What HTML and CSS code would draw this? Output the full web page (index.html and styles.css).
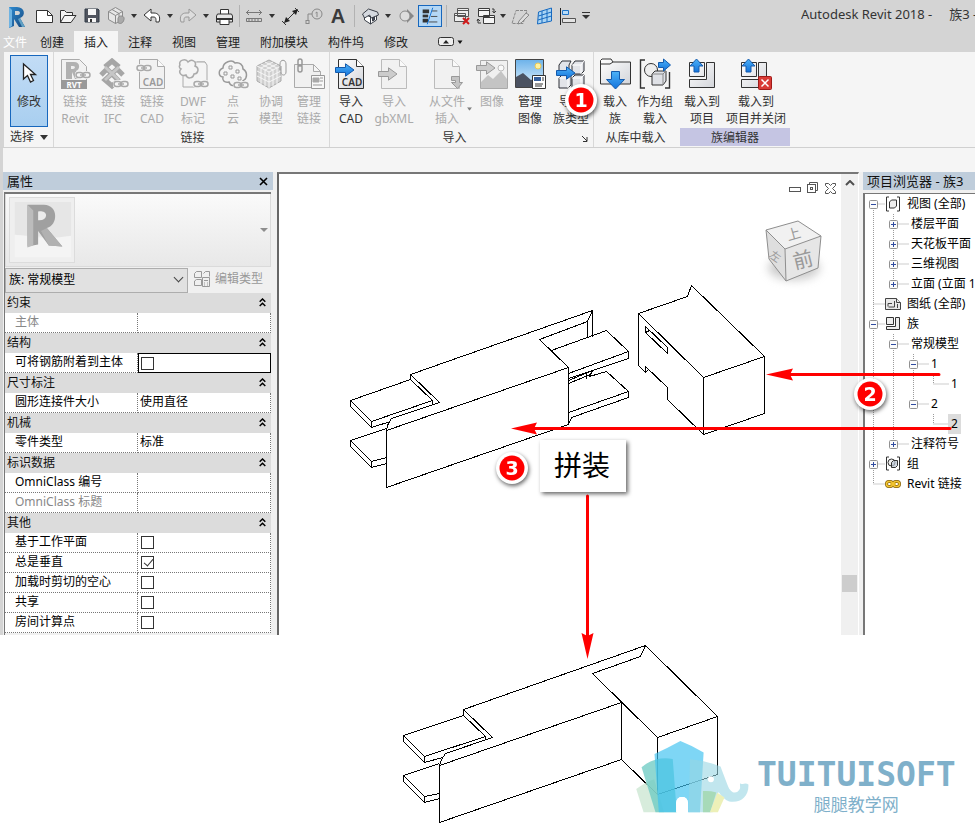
FILE: index.html
```html
<!DOCTYPE html>
<html lang="zh-CN">
<head>
<meta charset="utf-8">
<title>Autodesk Revit 2018 - 族3</title>
<link rel="stylesheet" href="styles.css">
</head>
<body>
<svg class="defs" aria-hidden="true">
  <defs>
    <linearGradient id="gBlue" x1="0" y1="0" x2="0" y2="1"><stop offset="0" stop-color="#4db1f7"/><stop offset="1" stop-color="#1273dc"/></linearGradient>
    <linearGradient id="gPaper" x1="0" y1="0" x2="1" y2="1"><stop offset="0" stop-color="#ffffff"/><stop offset="1" stop-color="#d3d5da"/></linearGradient>
    <linearGradient id="gSky" x1="0" y1="0" x2="0" y2="1"><stop offset="0" stop-color="#6cb2ea"/><stop offset="1" stop-color="#e4f2fb"/></linearGradient>
    <linearGradient id="gR" x1="0" y1="0" x2="1" y2="1"><stop offset="0" stop-color="#2e8ad0"/><stop offset="1" stop-color="#17477c"/></linearGradient>
    <symbol id="chain" viewBox="0 0 16 8">
      <g fill="none" stroke="#f5f5f5" stroke-width="4"><rect x="1.5" y="2" width="7" height="4" rx="2"/><rect x="7.500" y="2" width="7" height="4" rx="2"/></g>
      <g fill="none" stroke="#a9a9a9" stroke-width="1.500"><rect x="1" y="1.500" width="7" height="5" rx="2.500"/><rect x="8" y="1.500" width="7" height="5" rx="2.500"/><path d="M5 4h6"/></g>
    </symbol>
    <symbol id="caret" viewBox="0 0 6 4"><path d="M0 0h6L3 4z" fill="#333"/></symbol>
    <symbol id="page" viewBox="0 0 32 32"><path d="M3.500 1.500h18l7 7v22h-25z" fill="url(#gPaper)"/><path d="M21.500 1.500v7h7" fill="#fff"/></symbol>
    <symbol id="pageOff" viewBox="0 0 32 32"><path d="M3.500 1.500h18l7 7v22h-25z" fill="#f1f1f1"/><path d="M21.500 1.500v7h7" fill="#fafafa"/></symbol>
    <symbol id="arrow" viewBox="0 0 20 14"><path d="M.5 4.500h10V.8L19 7l-8.500 6.200V9.500H.5z"/></symbol>
    <symbol id="plus" viewBox="0 0 9 9"><rect x=".5" y=".5" width="8" height="8" rx="1" fill="#fbfbfb" stroke="#919191"/><path d="M2 4.500h5M4.500 2v5" stroke="#2f4ba0"/></symbol>
    <symbol id="minus" viewBox="0 0 9 9"><rect x=".5" y=".5" width="8" height="8" rx="1" fill="#fbfbfb" stroke="#919191"/><path d="M2 4.500h5" stroke="#2f4ba0"/></symbol>
    <symbol id="fold" viewBox="0 0 7 9"><path d="M.7 3.700L3.500 1l2.800 2.700M.7 8L3.500 5.300 6.300 8" fill="none" stroke="#000" stroke-width="1.500"/></symbol>
  </defs>
</svg>

<div class="app">
<header class="titlebar">
  <div class="quick" role="toolbar" aria-label="快速访问工具栏">
    <button class="tool logo" aria-label="Revit"><svg viewBox="0 0 24 24"><path d="M5 3h8c8 0 9 9 3 11l5 9h-6l-5-8v7l-5 2z" fill="url(#gR)"/><path d="M5 3l3 3v16l-3 2z" fill="#6fb3e2"/><path d="M11 7h3c3 0 2 4 0 4h-3z" fill="#d4d4d4"/><path d="M14 15l4 8h3l-5-9z" fill="#5fa0c4"/></svg></button>
    <button class="tool" aria-label="新建"><svg viewBox="0 0 24 24"><path d="M4.500 6.500h11l5 5v7h-16z" fill="#fff" stroke="#333"/><path d="M15.500 6.500v5h5" fill="none" stroke="#333"/></svg></button>
    <button class="tool" aria-label="打开"><svg viewBox="0 0 24 24"><path d="M4.500 18.500v-12h4l2 2h6v3M4.500 18.500l4-7h11.500l-5 7z" fill="#f4f4f4" stroke="#333"/></svg></button>
    <button class="tool" aria-label="保存"><svg viewBox="0 0 24 24"><path d="M5 5h13l1 1v12H5z" fill="#51555f" stroke="#333c49"/><path d="M8 5h8v6H8z" fill="#f6f6f6"/><path d="M8 14h8v4H8z" fill="#f6f6f6"/><path d="M10 15h2v3h-2z" fill="#333"/></svg></button>
    <button class="tool" aria-label="同步"><svg viewBox="0 0 24 24" fill="#e6e6e6" stroke="#8b8b8b"><path d="M4.500 7.500l7-4 7 4v8l-7 4-7-4z"/><path d="M4.500 7.500l7 4 7-4M11.500 11.500v8M8 5.500l7 4v8" fill="none"/><path d="M14 14.500c1-4 7-3 6 1s-4 5-6 3z" fill="#aaa"/></svg></button>
    <button class="drop" aria-label="同步选项"><svg viewBox="0 0 6 4"><use href="#caret"/></svg></button>
    <button class="tool" aria-label="放弃"><svg viewBox="0 0 24 24"><path d="M4 11l7-6v4h3c4 0 7 3 5 9h-3c0-4 0-5-3-5h-2v4z" fill="#fff" stroke="#333"/></svg></button>
    <button class="drop" aria-label="放弃列表"><svg viewBox="0 0 6 4"><use href="#caret"/></svg></button>
    <button class="tool" aria-label="重做"><svg viewBox="0 0 24 24"><path d="M20 11l-7-6v4h-3c-4 0-7 3-5 9h3c0-4 0-5 3-5h2v4z" fill="#ddd" stroke="#999"/></svg></button>
    <button class="drop" aria-label="重做列表"><svg viewBox="0 0 6 4"><use href="#caret"/></svg></button>
    <button class="tool" aria-label="打印"><svg viewBox="0 0 24 24"><path d="M8.500 10V5.500h8V10" fill="#fff" stroke="#333"/><path d="M5.500 10h14l1 2v6h-16v-6z" fill="#e6e6e6" stroke="#333"/><path d="M5 15h15" stroke="#333" stroke-width="2"/><path d="M8 15.500h9v5H8z" fill="#fff" stroke="#333"/></svg></button>
    <span class="split"></span>
    <button class="tool" aria-label="测量"><svg viewBox="0 0 24 24" fill="none" stroke="#777"><path d="M4 8.500h16M7 6L4.500 8.500 7 11M17 6l2.500 2.500L17 11"/><path d="M4.500 14.500h15v3h-15zM7 15v2M10 15v2M13 15v2M16 15v2"/></svg></button>
    <button class="drop" aria-label="测量选项"><svg viewBox="0 0 6 4"><use href="#caret"/></svg></button>
    <button class="tool" aria-label="对齐标注"><svg viewBox="0 0 24 24"><path d="M7 18L19 6M4 17l4 4M17 4l4 4" stroke="#333"/><path d="M6 19l2-6 4 4zM20 5l-6 2 4 4z" fill="#222"/></svg></button>
    <button class="tool" aria-label="按类别标记"><svg viewBox="0 0 24 24" fill="none" stroke="#888"><circle cx="15" cy="10" r="5"/><path d="M13.500 9l1.500-1v5M10 10H6v7"/><rect x="4" y="16.500" width="3" height="3"/></svg></button>
    <button class="tool letter" aria-label="文字">A</button>
    <span class="split wide"></span>
    <button class="tool" aria-label="默认三维视图"><svg viewBox="0 0 24 24" fill="#fff" stroke="#3b4049"><path d="M6.500 10v6l6 4v-7zM12.500 13l6-3v6l-6 4z"/><path d="M4.500 10l6-5 9 3 1 3-7 3-2-3-5 3z" fill="#d5d9df"/><path d="M14.500 17v-3l2-1v3z" fill="#4b5260"/></svg></button>
    <button class="drop" aria-label="三维视图选项"><svg viewBox="0 0 6 4"><use href="#caret"/></svg></button>
    <button class="tool" aria-label="剖面"><svg viewBox="0 0 24 24"><path d="M13 5v14l7-7z" fill="#888"/><circle cx="11" cy="12" r="5" fill="#ddd" stroke="#888"/></svg></button>
    <button class="tool pressed" aria-label="细线" aria-pressed="true"><svg viewBox="0 0 24 24"><path d="M4 7h7M4 17h6" stroke="#333" stroke-width="4"/><path d="M4 12h6" stroke="#333" stroke-width="3"/><path d="M14 6.500h6M13 12.500h7M11 18.500h9" stroke="#444"/><path d="M15 3L9 21" stroke="#0a6cd3"/></svg></button>
    <span class="split wide"></span>
    <button class="tool" aria-label="关闭隐藏窗口"><svg viewBox="0 0 24 24" fill="#eee" stroke="#555"><path d="M7.500 4.500h11v8h-11zM7.500 6.500h11M4.500 9.500h11v8h-11zM4.500 11.500h11"/><path d="M13 14l6 6M19 14l-6 6" stroke="#d01919" stroke-width="2"/></svg></button>
    <button class="tool" aria-label="切换窗口"><svg viewBox="0 0 24 24" fill="#f5f5f5" stroke="#3b3b3b"><path d="M4.500 4.500h11v8h-11zM4.500 6.500h11M9.500 11.500h11v8h-11zM9.500 13.500h11"/><path d="M18 5h2v3M18.500 7l1.500 2 2-2M4 15v4h3M3 17l1-2 2 2" fill="none"/></svg></button>
    <button class="drop short" aria-label="窗口列表"><svg viewBox="0 0 6 4"><use href="#caret"/></svg></button>
    <button class="tool" aria-label="参照平面"><svg viewBox="0 0 24 24" fill="none" stroke="#888"><path d="M8 6.500h11L15 19.500H4z" stroke-dasharray="3 1"/><path d="M18 9l3 2-8 8-3 1 1-3z" fill="#ddd"/></svg></button>
    <button class="tool" aria-label="工作平面"><svg viewBox="0 0 24 24" fill="#a9d4f4" stroke="#176ac0"><path d="M6.500 8l13-4v13l-14 3zM10 7v12M15 5.500V18M6.500 12l13-4M6 16l13.500-4"/></svg></button>
    <button class="tool" aria-label="对齐"><svg viewBox="0 0 24 24"><path d="M4.500 4v17" stroke="#222"/><path d="M6.500 6.500h6v4h-6z" fill="#b8dcf7" stroke="#1f74c8"/><path d="M6.500 14.500h13v4h-13z" fill="#e4e4e4" stroke="#555"/></svg></button>
    <button class="drop" aria-label="自定义"><svg viewBox="0 0 8 8" class="tall"><path d="M0 .5h8" stroke="#333"/><path d="M0 3h8L4 7z" fill="#333"/></svg></button>
  </div>
  <div class="caption"><span>Autodesk Revit 2018 -</span><span>族3 -</span></div>
</header>

<nav class="tabs">
  <a href="#" class="file">文件</a><a href="#">创建</a><a href="#" class="on">插入</a><a href="#">注释</a><a href="#">视图</a><a href="#">管理</a><a href="#" class="long">附加模块</a><a href="#" class="mid">构件坞</a><a href="#">修改</a>
  <button class="fold" aria-label="最小化功能区"><svg viewBox="0 0 26 10" width="26" height="10"><rect x=".5" y=".5" width="15" height="8" rx="2" fill="#eee" stroke="#333"/><path d="M5 6.500h6L8 3z" fill="#222"/><path d="M19.500 3.500h5l-2.500 3.500z" fill="#111"/></svg></button>
</nav>

<section class="ribbon">
  <div class="panel select">
    <button class="cmd modify"><svg viewBox="0 0 32 32"><path d="M10.500 6v15l4-3.500 3 6.500 3-1.500-3-6h5z" fill="#fff" stroke="#222" stroke-width="1.300"/></svg><span>修改</span></button>
    <h2>选择 <svg viewBox="0 0 8 5" width="8" height="5"><path d="M0 0h8L4 5z" fill="#333"/></svg></h2>
  </div>
  <div class="panel link">
    <div class="cmds">
      <button class="cmd" disabled><svg viewBox="0 0 32 32"><path d="M2.500 1.500h18l7 7v22h-25z" fill="#f1f1f1" stroke="#aaa"/><path d="M2 22h26v9H2z" fill="#999"/><path d="M7 4h8c7 0 6 8 2 9l4 8h-5l-3-7v7H7z" fill="#b1b1b1"/><path d="M12 8h2c3 0 2 3 0 3h-2z" fill="#eee"/><text x="15" y="30" class="tiny inv" text-anchor="middle">RVT</text><use href="#chain" x="16" y="13" width="16" height="8"/></svg><span>链接<br>Revit</span></button>
      <button class="cmd" disabled><svg viewBox="0 0 32 32"><g fill="none" stroke="#a6a6a6" stroke-width="5"><path d="M8 9l7-6 7 6M4 17l6-6 12 12M26 17l-6-6L8 22l7 6 7-6"/></g><path d="M8 9l14 13M22 9L8 22" stroke="#c6c6c6" stroke-width="3" fill="none"/><use href="#chain" x="16" y="22" width="16" height="8"/></svg><span>链接<br>IFC</span></button>
      <button class="cmd" disabled><svg viewBox="0 0 32 32"><g stroke="#aaa"><use href="#pageOff"/></g><use href="#chain" x="0" y="6" width="16" height="8"/><text x="17" y="28" class="tiny dim" text-anchor="middle">CAD</text></svg><span>链接<br>CAD</span></button>
      <button class="cmd" disabled><svg viewBox="0 0 32 32" fill="#f4f4f4" stroke="#aaa"><path d="M10 4h18v25H6V16"/><path d="M20 4h8l2 3v18h-8" /><path d="M3 7c-2-5 6-7 8-3 4-4 9 0 7 4 5 2 3 8-1 8-1 5-7 5-8 1-5 2-8-3-5-6-2-1-2-3-1-4z" stroke-width="1.500"/><use href="#chain" x="16" y="22" width="16" height="8"/></svg><span>DWF<br>标记</span></button>
      <button class="cmd" disabled><svg viewBox="0 0 32 32" fill="#f4f4f4" stroke="#999"><path d="M6 10c0-6 9-9 12-5 5-1 8 2 8 6 5 3 4 9 1 11l-5 4c-4 3-9 2-10-2-5 1-7-2-6-5-5-1-5-7 0-9z" stroke-width="1.500"/><path d="M12 8h3v3h-3zM19 12h3v3h-3zM7 14h3v3H7zM14 17h3v3h-3zM21 19h3v3h-3z"/><use href="#chain" x="16" y="23" width="16" height="8"/></svg><span>点<br>云</span></button>
      <button class="cmd" disabled><svg viewBox="0 0 32 32" fill="#d0d0d0" stroke="#aaa"><path d="M2 8l12-6 12 6v15l-12 7-12-7z"/><path d="M2 8l12 6 12-6M14 14v16M6 6l12 6v16M10 4l12 6v16M18 4L6 10v16M22 6l-12 6v16M2 13l12 6 12-6M2 18l12 6 12-6" stroke="#f7f7f7" fill="none"/><path d="M25 12V6c0-5 6-5 6 0v8c0 4-5 4-5 0V8" fill="#f5f5f5" stroke="#999"/></svg><span>协调<br>模型</span></button>
      <button class="cmd" disabled><svg viewBox="0 0 32 32" fill="#f0f0f0" stroke="#aaa"><path d="M1.500 6.500h19l7 7v16h-26zM20.500 6.500v7h7"/><path d="M18.500 17.500h13v13h-13z" fill="#f8f8f8" stroke="#999"/><path d="M20 20h6v4h-6z" fill="#aaa"/><path d="M27 20h3M27 23h3M20 27h9" stroke="#999"/><g fill="none" stroke="#999" stroke-width="1.500"><rect x="5" y="1" width="4" height="7" rx="2"/><rect x="5" y="7" width="4" height="7" rx="2"/></g></svg><span>管理<br>链接</span></button>
    </div>
    <h2>链接</h2>
  </div>
  <div class="panel import">
    <div class="cmds">
      <button class="cmd"><svg viewBox="0 0 32 32"><g stroke="#333"><use href="#page"/></g><g fill="url(#gBlue)" stroke="#145aac"><use href="#arrow" x="0" y="5" width="20" height="14"/></g><text x="17" y="28" class="tiny" text-anchor="middle">CAD</text></svg><span>导入<br>CAD</span></button>
      <button class="cmd" disabled><svg viewBox="0 0 32 32"><g stroke="#bbb"><use href="#pageOff"/></g><g fill="#ccc" stroke="#999"><use href="#arrow" x="0" y="9" width="20" height="14"/></g></svg><span>导入<br>gbXML</span></button>
      <button class="cmd more" disabled><svg viewBox="0 0 32 32"><g stroke="#bbb"><use href="#pageOff"/></g><path d="M20.500 18.500h8v6h3l-5 6-6-6h4v-2h-4z" fill="#c4c4c4" stroke="#999"/></svg><span>从文件<br>插入</span><svg class="caret" viewBox="0 0 6 4"><use href="#caret"/></svg></button>
      <button class="cmd" disabled><svg viewBox="0 0 32 32"><path d="M4.500 2.500h27v28h-27z" fill="#f0f0f0" stroke="#aaa"/><path d="M5 24l7-7 5 4 8-8 6 8v9H5z" fill="#c4c4c4"/><circle cx="25" cy="10" r="3" fill="#fafafa" stroke="#bbb"/><g fill="#ccc" stroke="#999"><use href="#arrow" x="0" y="3" width="20" height="14"/></g></svg><span>图像</span></button>
      <button class="cmd"><svg viewBox="0 0 32 32"><path d="M1.500 1.500h28v28h-28z" fill="url(#gSky)" stroke="#444"/><circle cx="24" cy="8" r="3" fill="#fff3a0" stroke="#e8c75a"/><path d="M2 19l7-4 8 7 10-5v12H2z" fill="#4b5261"/><path d="M18.500 17.500h13v13h-13z" fill="#fff" stroke="#333"/><path d="M20 19h7v4h-7z" fill="#345f9d"/><path d="M28 20h2M28 22h2M21 26h8M21 28h7" stroke="#333"/></svg><span>管理<br>图像</span></button>
      <button class="cmd"><svg viewBox="0 0 32 32" fill="#e2e4e9" stroke="#2c2f36"><path d="M4 7l3-4h9l-2 4v9H4zM17 7l3-4h9v10l-3 3h-9zM4 20l3-3h9v10l-3 3H4zM17 20l3-3h9v10l-3 3h-9z"/><path d="M17 7h9l3-4M26 7v9M4 20h9l3-3M13 20v10M17 20h9l3-3M26 20v10" stroke="#fff" fill="none"/><g fill="url(#gBlue)" stroke="#145aac"><use href="#arrow" x="1" y="8" width="20" height="14"/></g></svg><span>导入<br>族类型</span></button>
    </div>
    <h2>导入 <svg class="launch" viewBox="0 0 6 6" width="6" height="6"><path d="M0 0l5 5M5 1v4.500H1" stroke="#333" fill="none"/></svg></h2>
  </div>
  <div class="panel load">
    <div class="cmds">
      <button class="cmd"><svg viewBox="0 0 32 32"><path d="M1.500 26V2.500L3 1h9l2 3h17.500v22z" fill="url(#gPaper)" stroke="#333"/><path d="M2 6h9l3-2" stroke="#333" fill="none"/><path d="M12.500 13.500h8v8h5L16.500 31l-9-9.500h5z" fill="url(#gBlue)" stroke="#145aac"/></svg><span>载入<br>族</span></button>
      <button class="cmd"><svg viewBox="0 0 32 32"><path d="M6 2H1.500v28H6M26 30h4.500V14" fill="none" stroke="#333" stroke-width="1.400"/><circle cx="12" cy="12" r="6.500" fill="#eee" stroke="#333"/><path d="M13 16l3-3h11v10l-3 4H13z" fill="#dfe1e6" stroke="#333"/><path d="M13 16h11l3-3M24 16v11" fill="none" stroke="#888"/><path d="M19.500 4.500h5V1l7 6-7 6V9.500h-5z" fill="url(#gBlue)" stroke="#145aac"/></svg><span>作为组<br>载入</span></button>
    </div>
    <h2>从库中载入</h2>
  </div>
  <div class="panel family">
    <div class="cmds">
      <button class="cmd"><svg viewBox="0 0 32 32"><path d="M3.500 4.500h15v14h-15zM20.500 4.500h8v25h-25v-8h17z" fill="url(#gPaper)" stroke="#333"/><path d="M8 14V8H4l6.500-7L17 8h-4v6z" fill="url(#gBlue)" stroke="#145aac"/></svg><span>载入到<br>项目</span></button>
      <button class="cmd"><svg viewBox="0 0 32 32"><path d="M1.500 4.500h15v14h-15zM18.500 4.500h8v25h-25v-8h17z" fill="url(#gPaper)" stroke="#333"/><path d="M6 14V8H2l6.500-7L15 8h-4v6z" fill="url(#gBlue)" stroke="#145aac"/><rect x="18.500" y="18.500" width="13" height="13" rx="1" fill="#d93a35" stroke="#9f1a18"/><path d="M21.500 21.500l7 7M28.500 21.500l-7 7" stroke="#fff" stroke-width="1.500"/></svg><span>载入到<br>项目并关闭</span></button>
    </div>
    <h2>族编辑器</h2>
  </div>
</section>
<div class="options"></div>

<main class="work">
  <aside class="props">
    <header class="bar"><h2>属性</h2><button aria-label="关闭"><svg viewBox="0 0 9 9" width="9" height="9"><path d="M1 1l7 7M8 1L1 8" stroke="#000" stroke-width="1.600"/></svg></button></header>
    <div class="sheet">
      <div class="type">
        <svg class="thumb" viewBox="0 0 66 66"><path d="M0 0h66v66H0z" fill="#efefef"/><path d="M5 4h58v38L5 38z" fill="#e6e6e6"/><path d="M5 38l34 4 24-3v22H5z" fill="#f4f4f4"/><path d="M18 7h17c15 0 15 21 3 24l16 19-14-1-11-15v14l-11 2z" fill="#a0a0a0"/><path d="M18 7l6 6v36l-6 2z" fill="#bcbcbc"/><path d="M29 14c11-3 11 10 0 9z" fill="#ececec"/><path d="M38 31l16 19-14-1-8-15z" fill="#b1b1b1"/></svg>
        <svg class="down" viewBox="0 0 8 4" width="8" height="4"><path d="M0 0h8L4 4z" fill="#8d8d8d"/></svg>
      </div>
      <div class="pick">
        <select aria-label="族"><option>族: 常规模型</option></select>
        <button disabled><svg viewBox="0 0 18 18" width="18" height="18" fill="none" stroke="#999"><path d="M1.500 3.500l2-2h5v6h-7zM10.500 3.500l2-2h4v5M1.500 11l2-1.500h5v6h-7z"/><path d="M9.500 7.500h7v9h-7zM11 10.500h4M11 13h1M14 13h1M11 15h1M14 15h1"/></svg>编辑类型</button>
      </div>
      <table class="grid">
        <tbody>
        <tr><th colspan="2">约束<svg viewBox="0 0 7 9"><use href="#fold"/></svg></th></tr>
        <tr class="off"><td>主体</td><td></td></tr>
        <tr><th colspan="2">结构<svg viewBox="0 0 7 9"><use href="#fold"/></svg></th></tr>
        <tr><td><label for="c1">可将钢筋附着到主体</label></td><td class="focus"><input type="checkbox" id="c1"></td></tr>
        <tr><th colspan="2">尺寸标注<svg viewBox="0 0 7 9"><use href="#fold"/></svg></th></tr>
        <tr><td>圆形连接件大小</td><td>使用直径</td></tr>
        <tr><th colspan="2">机械<svg viewBox="0 0 7 9"><use href="#fold"/></svg></th></tr>
        <tr><td>零件类型</td><td>标准</td></tr>
        <tr><th colspan="2">标识数据<svg viewBox="0 0 7 9"><use href="#fold"/></svg></th></tr>
        <tr><td>OmniClass 编号</td><td></td></tr>
        <tr class="off"><td>OmniClass 标题</td><td></td></tr>
        <tr><th colspan="2">其他<svg viewBox="0 0 7 9"><use href="#fold"/></svg></th></tr>
        <tr><td><label for="c2">基于工作平面</label></td><td><input type="checkbox" id="c2"></td></tr>
        <tr><td><label for="c3">总是垂直</label></td><td><input type="checkbox" id="c3" checked></td></tr>
        <tr><td><label for="c4">加载时剪切的空心</label></td><td><input type="checkbox" id="c4"></td></tr>
        <tr><td><label for="c5">共享</label></td><td><input type="checkbox" id="c5"></td></tr>
        <tr><td><label for="c6">房间计算点</label></td><td><input type="checkbox" id="c6"></td></tr>
        </tbody>
      </table>
    </div>
  </aside>

  <section class="view">
    <svg class="model" viewBox="279 174 562 461" width="562" height="461">
      <g class="wire">
        <path d="M350.500 400.500L410.500 379.500L432.500 400.500L371.500 421.500zM350.500 400.500V406.500L371.500 427.500V421.500M371.500 427.500L390.500 421.500"/>
        <path d="M410.500 379.500V374.500L592.500 310.500V336.500M410.500 374.500L439.500 402.500L391.500 418.500L387.500 425.500L386.500 430.500M432.500 400.500V404.500"/>
        <path d="M386.500 430.500L568.500 367.500V424.500L386.500 487.500z"/>
        <path d="M592.500 310.500L587.500 321.500V337.500M587.500 321.500L539.500 339.500L568.500 367.500"/>
        <path d="M551.500 350.500L606.500 330.500L628.500 351.500L568.500 373.500M628.500 351.500V358.500L568.500 378.500"/>
        <path d="M589.500 376.500L606.500 371.500L628.500 391.500L568.500 412.500M628.500 391.500V397.500L571.500 417.500L568.500 424.500"/>
        <path d="M568.500 380.500L592.500 370.500M568.500 383.500L590.500 374.500M586.500 373.500V378.500M589.500 376.500L592.500 370.500"/>
        <path d="M350.500 440.500L386.500 428.500M350.500 440.500L371.500 461.500L386.500 457.500M350.500 440.500V446.500L371.500 467.500L386.500 463.500M371.500 461.500V467.500"/>
        <path d="M638.500 313.500L687.500 296.500L691.500 285.500L764.500 356.500V413.500L703.500 434.500L667.500 399.500V387.500L645.500 366.500V372.500L638.500 365.500zL703.500 377.500L764.500 356.500M703.500 377.500V434.500M645.500 372.500L648.500 369.500"/>
        <path d="M645.500 326.500L667.500 347.500V353.500L645.500 332.500zM645.500 332.500L649.500 330.500"/>
      </g>
      <g class="cube">
        <ellipse cx="794" cy="268" rx="26" ry="12" fill="#999" opacity=".5" filter="url(#soft)"/>
        <path d="M766 230l32-9 23 15-36 13z" fill="#f1f1f1"/><path d="M766 230l19 19 1 32-17-22z" fill="#dedede"/><path d="M785 249l36-13-3 32-32 13z" fill="#e6e6e6"/>
        <g fill="none" stroke="#8e8e8e"><path d="M766 230l32-9 23 15-36 13zM766 230l3 29 17 22 32-13 3-32M785 249l1 32"/></g>
        <text x="787" y="239" transform="rotate(-16 794 235)" font-size="14">上</text><text x="770" y="260" transform="rotate(35 775 256)" font-size="11">左</text><text x="793" y="267" transform="rotate(-14 803 260)" font-size="20">前</text>
      </g>
      <g fill="none" stroke="#555"><rect x="789.500" y="187.500" width="11" height="4"/><rect x="807.500" y="184.500" width="8" height="8"/><path d="M809.500 184.500v-2h8v8h-2"/><rect x="810.500" y="187.500" width="2" height="2"/><path d="M825.500 183.500h3l2 2 2-2h3v2l-3 3 3 3v2h-3l-2-2-2 2h-3v-2l3-3-3-3z"/></g>
      <filter id="soft" x="-1" y="-1" width="3" height="3"><feGaussianBlur stdDeviation="5"/></filter>
    </svg>
    <div class="scroll"><svg viewBox="0 0 10 6" width="10" height="6"><path d="M1 5l4-4 4 4" fill="none" stroke="#505050" stroke-width="2"/></svg><i></i></div>
  </section>

  <aside class="browser">
    <header class="bar"><h2>项目浏览器 - 族3</h2></header>
    <div class="tree">
      <svg class="lines" viewBox="0 0 110 300" width="110" height="300"><path d="M8.500 10v280M8.500 10h12M8.500 110h12M8.500 130h12M8.500 270h12M8.500 290h12M28.500 20v70M28.500 30h16M28.500 50h16M28.500 70h16M28.500 90h16M28.500 140v110M28.500 150h16M28.500 250h16M48.500 160v50M48.500 170h15M48.500 210h15M68.500 180v10h15M68.500 220v10h15" fill="none" stroke="#9b9b9b" stroke-dasharray="1 1"/></svg>
      <ul>
        <li><svg class="tog"><use href="#minus"/></svg><svg class="ico" viewBox="0 0 16 16"><path d="M4 1H1.500v14H4M12 1h2.500v14H12" fill="none" stroke="#333"/><path d="M4.500 6l2-2h5v6l-2 2h-5z" fill="#eee" stroke="#333"/></svg>视图 (全部)</li>
        <li class="l1"><svg class="tog"><use href="#plus"/></svg>楼层平面</li>
        <li class="l1"><svg class="tog"><use href="#plus"/></svg>天花板平面</li>
        <li class="l1"><svg class="tog"><use href="#plus"/></svg>三维视图</li>
        <li class="l1"><svg class="tog"><use href="#plus"/></svg>立面 (立面 1</li>
        <li class="leaf"><svg class="ico" viewBox="0 0 16 16" fill="#e9e9e9" stroke="#444"><path d="M.5 2.500h11l4 4v7H.5z"/><path d="M3 10.500v-3h4M9.500 5v6h-6M11.500 2.500v4h4M12.500 8v4"/></svg>图纸 (全部)</li>
        <li><svg class="tog"><use href="#minus"/></svg><svg class="ico" viewBox="0 0 16 16" fill="#eee" stroke="#333"><path d="M1.500 1.500h7v7h-7zM10.500 1.500h4v12h-13v-3h9z"/></svg>族</li>
        <li class="l1"><svg class="tog"><use href="#minus"/></svg>常规模型</li>
        <li class="l2"><svg class="tog"><use href="#minus"/></svg>1</li>
        <li class="l3">1</li>
        <li class="l2"><svg class="tog"><use href="#minus"/></svg>2</li>
        <li class="l3"><mark>2</mark></li>
        <li class="l1"><svg class="tog"><use href="#plus"/></svg>注释符号</li>
        <li><svg class="tog"><use href="#plus"/></svg><svg class="ico" viewBox="0 0 16 16" stroke="#333" fill="none"><path d="M4 1H1.500v13H4M12 1h2.500v13H12"/><circle cx="6.500" cy="6.500" r="3.500" fill="#eee"/><path d="M6.500 6.500l2-2h4v5l-2 2h-4z" fill="#b9c4d3" fill-opacity=".7"/></svg>组</li>
        <li class="leaf"><svg class="ico" viewBox="0 0 16 16" fill="none"><g stroke="#86610b" stroke-width="3"><rect x="1.500" y="5.500" width="6" height="5" rx="2.500"/><rect x="8.500" y="5.500" width="6" height="5" rx="2.500"/></g><g stroke="#f3c631" stroke-width="1.500"><rect x="1.500" y="5.500" width="6" height="5" rx="2.500"/><rect x="8.500" y="5.500" width="6" height="5" rx="2.500"/><path d="M5 8h6"/></g></svg>Revit 链接</li>
      </ul>
    </div>
  </aside>
</main>

<section class="result">
  <svg class="model" viewBox="279 635 460 198" width="460" height="198">
    <g class="wire">
      <path d="M403.500 735.500L463.500 715.500L485.500 736.500L424.500 756.500zM403.500 735.500V741.500L424.500 762.500V756.500M424.500 762.500L442.500 757.500"/>
      <path d="M463.500 715.500V709.500L645.500 645.500L717.500 716.500V774.500L657.500 794.500V737.500L592.500 673.500L640.500 656.500L645.500 645.500M717.500 716.500L657.500 737.500M463.500 709.500L492.500 737.500L445.500 753.500L441.500 759.500L439.500 765.500M485.500 736.500V739.500"/>
      <path d="M439.500 765.500L621.500 702.500V759.500L439.500 822.500zM621.500 759.500L657.500 794.500"/>
      <path d="M403.500 775.500L439.500 763.500M403.500 775.500L424.500 796.500L439.500 793.500M403.500 775.500V781.500L424.500 802.500L439.500 798.500M424.500 796.500V802.500"/>
    </g>
  </svg>
  <div class="brand">
    <svg viewBox="18 30 342 220" width="114" height="73">
      <path d="M18 178q24-20 54-30l30 100H40z" fill="#c9e5d0" opacity=".75"/>
      <path d="M34 112q40-34 94-25l12 161H76z" fill="#6ac9c1" opacity=".75"/>
      <path d="M73 72q40-18 78-39 36 14 70 35l-11 180h-36v-28q-2-18-18-18t-18 18v28H86z" fill="#3ec2f0" opacity=".67"/>
      <path d="M180 88q45 3 92 22 8 22 22 58c8 22 26 28 36 10 3-9-2-12 2-18q4 4 10 2 8-2 14 2c2 38-25 57-58 51q-16-4-32-28l-18 61h-72z" fill="#97d6e2" opacity=".6"/>
      <path d="M219 184q20-2 40 4l-18 60h-22z" fill="#9ed5a6" opacity=".75"/><path d="M262 189l22 14-20 45h-24z" fill="#edf0b8"/>
      <circle cx="243" cy="148" r="9" fill="#fff"/><path d="M138 248v-28q2-18 18-18t18 18v28z" fill="#fff"/>
    </svg>
    <p><b>TUITUISOFT</b><span>腿腿教学网</span></p>
  </div>
</section>

<svg class="notes" viewBox="0 0 975 833" width="975" height="833">
  <defs><filter id="drop" x="-.3" y="-.3" width="1.700" height="1.700"><feDropShadow dx="2" dy="2" stdDeviation="2" flood-opacity=".6"/></filter></defs>
  <g stroke="#f00" stroke-width="3" stroke-linecap="round"><path d="M785 374.500h154M530 428.500h420M587.500 496v145"/></g>
  <g fill="#f00"><path d="M766 374.500l27-6-3 6 3 6zM511 428.500l26-6-3 6 3 6zM587.500 659l-6-26 6 3 6-3z"/></g>
  <rect x="540" y="440" width="86" height="52" fill="#fff" filter="url(#drop)"/>
  <text x="582" y="476" class="big">拼装</text>
  <g class="badge"><circle cx="581" cy="100" r="16" class="ring"/><circle cx="581" cy="100" r="12.500"/><text x="581" y="107">1</text></g>
  <g class="badge"><circle cx="870" cy="394" r="16" class="ring"/><circle cx="870" cy="394" r="12.500"/><text x="870" y="401">2</text></g>
  <g class="badge"><circle cx="512" cy="468" r="16" class="ring"/><circle cx="512" cy="468" r="12.500"/><text x="512" y="475">3</text></g>
</svg>
</div>
</body>
</html>
```
FILE: styles.css
```css
* { box-sizing: border-box; }
body { margin: 0; background: #fff; color: #000; font: 12px/20px "Noto Sans", "Noto Sans CJK SC", sans-serif; overflow-x: hidden; }
button { border: 0; padding: 0; background: none; font: inherit; color: inherit; }
h2, p, ul { margin: 0; padding: 0; font-size: 12px; font-weight: 400; list-style: none; }
.defs { position: absolute; width: 0; height: 0; }
.app { position: relative; overflow: hidden; }

/* quick access and caption */
.titlebar { display: flex; justify-content: space-between; height: 31px; background: #d4d4d4; }
.quick { display: flex; align-items: center; padding-left: 4px; }
.tool { flex: none; width: 24px; height: 22px; display: flex; align-items: center; justify-content: center; }
.tool svg { width: 24px; height: 24px; }
.logo { margin-right: 4px; }
.pressed { background: #b4d7f5; border: 1px solid #1767bd; }
.letter { font: bold 20px/22px "Liberation Sans", sans-serif; color: #3b3b3b; }
.drop { flex: none; width: 12px; height: 22px; display: flex; align-items: center; justify-content: center; }
.drop svg { width: 6px; height: 4px; }
.drop svg.tall { width: 8px; height: 8px; }
.drop.short { width: 10px; }
.split { flex: none; width: 6px; height: 22px; background: linear-gradient(#b2b2b2, #b2b2b2) center / 1px 100% no-repeat; }
.split.wide { width: 8px; }
.caption { display: flex; gap: 17px; width: 174px; overflow: hidden; white-space: nowrap; line-height: 28px; color: #333; font-size: 13px; }
.caption span { flex: none; }

/* tabs */
.tabs { display: flex; align-items: center; height: 21px; background: #d4d4d4; color: #222; }
.tabs a { width: 44px; height: 21px; line-height: 23px; text-align: center; color: inherit; text-decoration: none; }
.tabs .file { width: 30px; color: #fff; }
.tabs .on { background: #f5f5f5; }
.tabs .long { width: 68px; }
.tabs .mid { width: 56px; }
.fold { margin-left: 20px; display: flex; }

/* ribbon */
.ribbon { display: flex; height: 96px; background: #f5f5f5; border-left: 4px solid #d4d4d4; border-bottom: 1px solid #d0d0d0; color: #333; }
.panel { display: flex; flex-direction: column; justify-content: space-between; padding-bottom: 1px; border-right: 1px solid #d8d8d8; }
.panel h2 { height: 18px; line-height: 20px; text-align: center; }
.cmds { display: grid; }
.cmd { display: flex; flex-direction: column; align-items: center; gap: 3px; padding-top: 6px; line-height: 17px; white-space: nowrap; min-width: 0; color: #333; }
.cmd > svg { flex: none; width: 32px; height: 32px; }
.cmd:disabled { color: #aaa; }
.select { width: 50px; }
.select h2 { display: flex; gap: 6px; padding-left: 6px; align-items: center; }
.modify { width: 38px; height: 72px; margin: 3px 6px 0; padding-top: 2px; background: linear-gradient(#c2dcf5, #a9cff0); border: 1px solid #1767bd; }
.link { width: 276px; padding-left: 2px; }
.link .cmds { grid-template-columns: 38px 38px 40px 42px 38px 38px 38px; }
.import { width: 264px; }
.import .cmds { grid-template-columns: 42px 44px 62px 28px 48px 34px; }
.import h2 { position: relative; padding-right: 14px; }
.load { width: 86px; border-right: 0; }
.load .cmds { grid-template-columns: 42px 38px; }
.load h2 { padding-right: 3px; }
.family { width: 110px; border-right: 0; }
.family .cmds { grid-template-columns: 44px 64px; }
.family h2 { background: #c5c5e3; }
.launch { position: absolute; right: 5px; top: 8px; }
.more { position: relative; }
.cmd > .caret { position: absolute; right: 6px; bottom: 16px; width: 5px; height: 4px; opacity: .6; }
.tiny { font: 600 10px "Noto Sans", sans-serif; fill: #333; }
.tiny.dim { fill: #999; }
.tiny.inv { fill: #fff; font-size: 8px; font-weight: 700; }
.options { height: 24px; background: #f5f5f5; border-left: 3px solid #d4d4d4; }

/* workspace */
.work { display: grid; grid-template-columns: 270px minmax(0, 1fr) 112px; column-gap: 4px; height: 463px; background: #f0f0f0; border-left: 3px solid #d4d4d4; }
.bar { display: flex; align-items: center; justify-content: space-between; height: 18px; padding: 0 5px 0 4px; background: #bfcddb; color: #111; white-space: nowrap; overflow: hidden; }
.bar h2 { font-size: 13px; line-height: 18px; }
.bar button { display: flex; }
.sheet { margin: 2px 2px 0 1px; height: 443px; border-left: 1px solid #777; border-top: 2px solid #777; background: #f0f0f0; }
.type { display: flex; align-items: center; justify-content: space-between; height: 73px; padding: 0 2px 0 3px; background: linear-gradient(#fafafa, #e8e8e8); border: 1px solid #dadada; border-top: 0; }
.thumb { width: 66px; height: 66px; border: 1px solid #dcdcdc; }
.pick { position: relative; display: flex; height: 26px; align-items: center; gap: 5px; }
.pick select { width: 183px; height: 25px; padding: 0 24px 0 3px; border: 1px solid #adadad; border-radius: 0; appearance: none; font: inherit; color: #000; background: #e1e1e1; }
.pick::after { content: ""; position: absolute; left: 170px; top: 7px; width: 6px; height: 6px; border: solid #444; border-width: 0 1px 1px 0; transform: rotate(45deg); }
.pick button { display: flex; align-items: center; gap: 4px; padding-bottom: 2px; color: #999; }
.grid { width: 100%; border-collapse: separate; border-spacing: 0; table-layout: fixed; background: #fff; }
.grid th, .grid td { height: 20px; padding: 0; line-height: 18px; font-weight: 400; text-align: left; }
.grid th { padding-left: 2px; background: #dcdcdc; color: #111; }
.grid th svg { float: right; width: 7px; height: 9px; margin: 4px 5px 0 0; }
.grid td { line-height: 16px; padding: 0 0 2px 2px; border-bottom: 1px dotted #777; border-right: 1px dotted #777; }
.grid td:first-child { width: 133px; padding-left: 10px; }
.grid .off { color: #888; }
.grid td.focus { border: 1px solid #000; outline: 1px solid #000; outline-offset: -1px; padding-left: 1px; }
.grid input { appearance: none; display: block; width: 13px; height: 13px; margin: 2px 0 0 1px; border: 1px solid #333; background: #fff; }
.grid input:checked::after { content: ""; display: block; width: 4px; height: 8px; margin-left: 4px; border: solid #333; border-width: 0 1px 1px 0; transform: rotate(40deg); }

.view { display: flex; justify-content: space-between; min-width: 0; border-left: 2px solid #666; border-top: 2px solid #777; border-right: 1px solid #fff; background: #fff; overflow: hidden; }
.model { flex: none; display: block; }
.wire { fill: none; stroke: #000; stroke-width: 1; shape-rendering: crispEdges; }
.cube text { fill: #999; }
.scroll { flex: 1; display: flex; flex-direction: column; align-items: center; padding-top: 6px; background: #f0f0f0; }
.scroll i { width: 15px; height: 17px; margin-top: 389px; background: #cdcdcd; }
.browser { min-width: 0; }
.tree { position: relative; height: 442px; margin: 3px 0 0; border-left: 2px solid #777; border-top: 1px solid #777; background: #fff; overflow: hidden; white-space: nowrap; }
.lines { position: absolute; left: 0; top: 0; }
.tree ul { position: relative; }
.tree li { display: flex; align-items: center; height: 20px; padding-left: 4px; }
.tree .l1 { padding-left: 24px; }
.tree .l2 { padding-left: 44px; }
.tree .l3 { padding-left: 86px; }
.tree .leaf { padding-left: 20px; }
.tog { flex: none; width: 9px; height: 9px; margin-right: 13px; }
.ico { flex: none; width: 16px; height: 16px; margin-right: 6px; background: #fff; }
li:not([class]) .tog { margin-right: 7px; }
mark { padding: 0 3px; margin-left: -3px; background: #dcdcdc; }

/* assembled result */
.result { display: flex; padding-left: 279px; height: 198px; background: #fff; }
.brand { flex: none; display: flex; align-items: flex-start; gap: 7px; margin-left: -103px; padding-top: 105px; }
.brand p { display: flex; flex-direction: column; align-items: center; padding-top: 15px; color: #7fb0ca; }
.brand b { font: bold 33px/40px "DejaVu Sans Mono", monospace; }
.brand span { font-size: 17px; line-height: 20px; }

/* annotations */
.notes { position: absolute; left: 0; top: 0; pointer-events: none; }
.big { font-size: 28px; text-anchor: middle; }
.badge { filter: drop-shadow(1px 2px 2px rgba(0, 0, 0, .6)); fill: #f00; }
.badge .ring { fill: #fff; }
.badge text { fill: #fff; font: bold 19px "DejaVu Sans", sans-serif; text-anchor: middle; }
```
